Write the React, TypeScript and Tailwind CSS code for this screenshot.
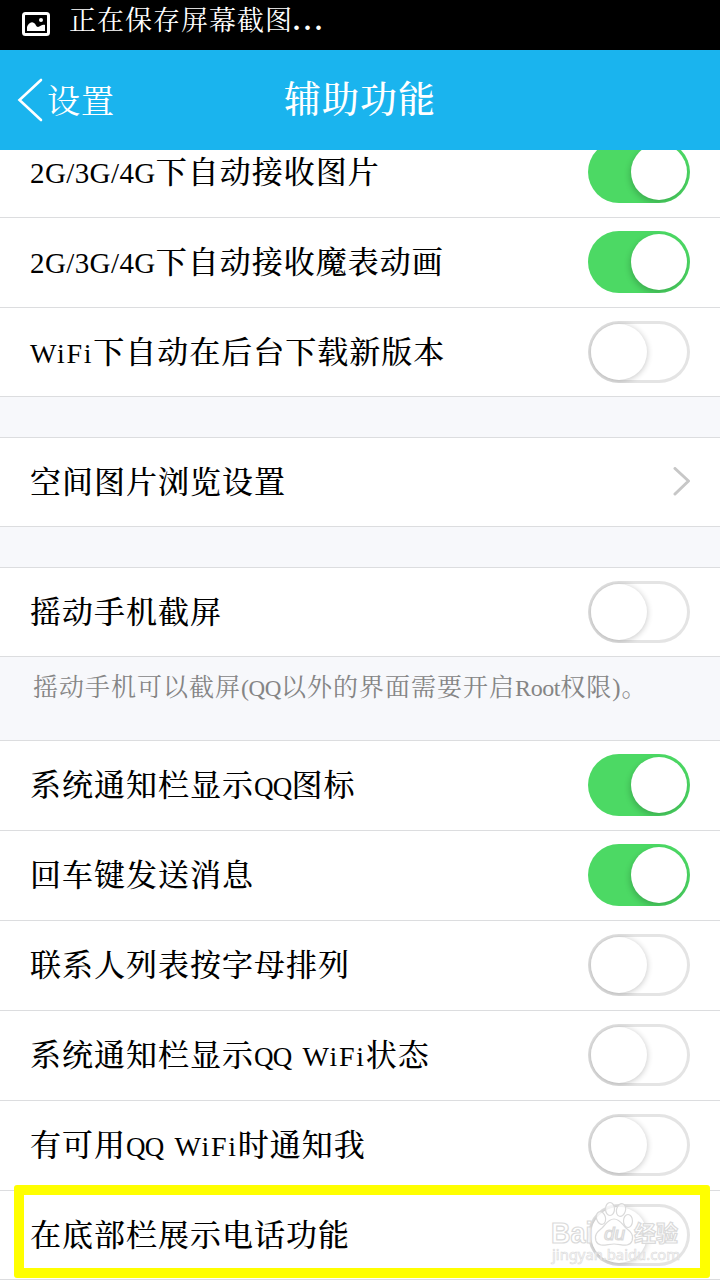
import React, { useState } from 'react';

interface Setting {
  id: string;
  label: string;
  on: boolean;
}

const networkSettings: Setting[] = [
  { id: 'pic', label: '2G/3G/4G下自动接收图片', on: true },
  { id: 'emoji', label: '2G/3G/4G下自动接收魔表动画', on: true },
  { id: 'update', label: 'WiFi下自动在后台下载新版本', on: false },
];

const noticeSettings: Setting[] = [
  { id: 'icon', label: '系统通知栏显示QQ图标', on: true },
  { id: 'enter', label: '回车键发送消息', on: true },
  { id: 'sort', label: '联系人列表按字母排列', on: false },
  { id: 'wifi', label: '系统通知栏显示QQ WiFi状态', on: false },
  { id: 'wifiNotice', label: '有可用QQ WiFi时通知我', on: false },
  { id: 'phone', label: '在底部栏展示电话功能', on: false },
];

// Latin runs are spaced differently from the Chinese text around them
const latinClass = (part: string) => {
  if (part === 'QQ') return 'text-[27px] tracking-[-0.7px]';
  if (part === 'WiFi') return 'text-[28px] tracking-[1.7px]';
  if (part === ' ') return 'text-[28px] tracking-[4px]';
  return 'text-[29px] tracking-[0.4px]';
};

const Label: React.FC<{ text: string }> = ({ text }) => (
  <span className="whitespace-pre pt-0.5 text-[31px] font-medium leading-[40px] tracking-[1px] text-black">
    {text.split(/(QQ|WiFi|2G\/3G\/4G| )/).filter(Boolean).map((part, i) =>
      /^[\x20-\x7e]+$/.test(part) ? <span key={i} className={`font-normal ${latinClass(part)}`}>{part}</span> : part
    )}
  </span>
);

const Toggle: React.FC<{ on: boolean; onChange: () => void }> = ({ on, onChange }) => (
  <button
    role="switch"
    aria-checked={on}
    onClick={onChange}
    className={`flex h-[62px] w-[102px] shrink-0 items-center rounded-full p-[3px] ${on ? 'justify-end bg-[#4cd964]' : 'justify-start bg-white shadow-[inset_0_0_0_3px_#e4e4e4]'} overflow-hidden`}
  >
    <span className={`h-14 w-14 rounded-full bg-white ${on ? 'shadow-[-1px_3px_6px_rgba(0,0,0,0.2)]' : 'shadow-[0_1px_6px_rgba(0,0,0,0.24)]'}`} />
  </button>
);

const Row: React.FC<{ setting: Setting; height?: string }> = ({ setting, height = 'h-[90px] pb-px' }) => {
  const [on, setOn] = useState(setting.on);
  return (
    <div className={`flex shrink-0 items-center justify-between border-b border-[#dcdddf] bg-white px-[30px] ${height}`}>
      <Label text={setting.label} />
      <Toggle on={on} onChange={() => setOn(!on)} />
    </div>
  );
};

const Watermark = () => (
  <svg className="pointer-events-none absolute left-[548px] top-[10px]" width="140" height="66" viewBox="0 0 140 66">
    <g fill="#fff" fillOpacity="0.7" stroke="#dadada" strokeWidth="1.2">
      <text x="3" y="42" fontFamily="Liberation Sans" fontWeight="bold" fontSize="29" textLength="42" lengthAdjust="spacingAndGlyphs">Bai</text>
      <path d="M66 18c-6 0-8 5-12 9-5 4-8 7-6 13 3 7 11 3 18 3s15 4 18-3c2-6-1-9-6-13-4-4-6-9-12-9Z" />
      <ellipse cx="53" cy="17" rx="4.5" ry="6.5" transform="rotate(-15 53 17)" />
      <ellipse cx="62" cy="8" rx="4.5" ry="6.5" />
      <ellipse cx="73" cy="9" rx="4.5" ry="6.5" transform="rotate(15 73 9)" />
      <ellipse cx="80" cy="20" rx="4.5" ry="6.5" />
      <text x="56" y="39" fontFamily="Liberation Sans" fontStyle="italic" fontSize="19">du</text>
      <text x="86" y="40" fontFamily="Noto Sans CJK SC" fontWeight="bold" fontSize="22" textLength="44">经验</text>
      <text x="4" y="59" fontFamily="Noto Sans" fontSize="14" strokeWidth="0.6" textLength="128" lengthAdjust="spacingAndGlyphs">jingyan.baidu.com</text>
    </g>
  </svg>
);

export default function App() {
  return (
    <div className="flex h-[1280px] w-[720px] flex-col overflow-hidden bg-[#f7f8fb] font-['Liberation_Serif','Noto_Serif_CJK_SC','Noto_Sans_CJK_SC',serif] font-normal">
      {/* Status bar */}
      <div className="flex h-[50px] shrink-0 bg-black pl-[22px] text-white">
        <svg className="mt-3 shrink-0" width="28" height="24" viewBox="0 0 28 24" fill="none">
          <rect x="1.5" y="1.5" width="25" height="21" rx="2" stroke="#fff" strokeWidth="3" />
          <path d="M5 19v-4c1-3 4-6 7-4 2 1 2 4 4 4 2 0 4-3 7-2v6Z" fill="#fff" />
          <circle cx="19" cy="8" r="2" fill="#fff" />
        </svg>
        <span className="ml-[19px] h-10 pt-0.5 text-[27px] leading-[38px] tracking-[1px]">
          正在保存屏幕截图<span className="text-[28px] font-bold leading-none tracking-[4px]">...</span>
        </span>
      </div>

      {/* Title bar */}
      <header className="grid h-[100px] shrink-0 grid-cols-[1fr_auto_1fr] items-center bg-[#1ab4ee] text-white">
        <button className="flex items-center pl-[17px] text-[33px] leading-[40px] tracking-[1px]">
          <svg className="mr-1" width="26" height="44" viewBox="0 0 26 44" fill="none" stroke="#fff" strokeWidth="2.6" strokeLinecap="round">
            <path d="M24 2 2.5 22 24 42" />
          </svg>
          <span className="pt-[3px]">设置</span>
        </button>
        <h1 className="pt-px text-[37px] font-medium leading-[44px] tracking-[1px]">辅助功能</h1>
      </header>

      <main className="flex flex-1 flex-col overflow-hidden">
        {/* List is scrolled, the first row is partly under the title bar */}
        <section className="-mt-[22px] flex shrink-0 flex-col">
          <Row setting={networkSettings[0]} />
          <Row setting={networkSettings[1]} />
          <Row setting={networkSettings[2]} height="h-[89px]" />
        </section>

        <section className="mt-10 flex h-[90px] shrink-0 items-center justify-between border-y border-[#dcdddf] bg-white pb-px pl-[30px] pr-[29px]">
          <Label text="空间图片浏览设置" />
          <svg width="18" height="30" viewBox="0 0 18 30" fill="none" stroke="#c7c7c7" strokeWidth="3" strokeLinecap="round" strokeLinejoin="round">
            <path d="M2 1.5 15.5 14 2 27" />
          </svg>
        </section>

        <section className="mt-10 shrink-0 border-t border-[#dcdddf]">
          <Row setting={{ id: 'shake', label: '摇动手机截屏', on: false }} height="h-[89px]" />
          <p className="h-[83px] whitespace-nowrap pl-[33px] pt-[11px] text-[25px] leading-[40px] tracking-[1px] text-[#858585]">
            摇动手机可以截屏<span className="text-[24px] tracking-[-0.4px]">(</span><span className="text-[23px] tracking-[-0.4px]">QQ</span>以外的界面需要开启<span className="text-[24px] tracking-[-0.4px]">Root</span>权限)。
          </p>
        </section>

        <section className="flex shrink-0 flex-col border-t border-[#dcdddf]">
          {noticeSettings.slice(0, 5).map(s => <Row key={s.id} setting={s} />)}
          <div className="relative">
            <Row setting={noticeSettings[5]} height="h-[89px]" />
            <Watermark />
            <div className="pointer-events-none absolute -top-[6px] left-[14px] h-[93px] w-[696px] rounded-[3px] border-[10px] border-[#ffff00]" />
          </div>
        </section>
      </main>
    </div>
  );
}
